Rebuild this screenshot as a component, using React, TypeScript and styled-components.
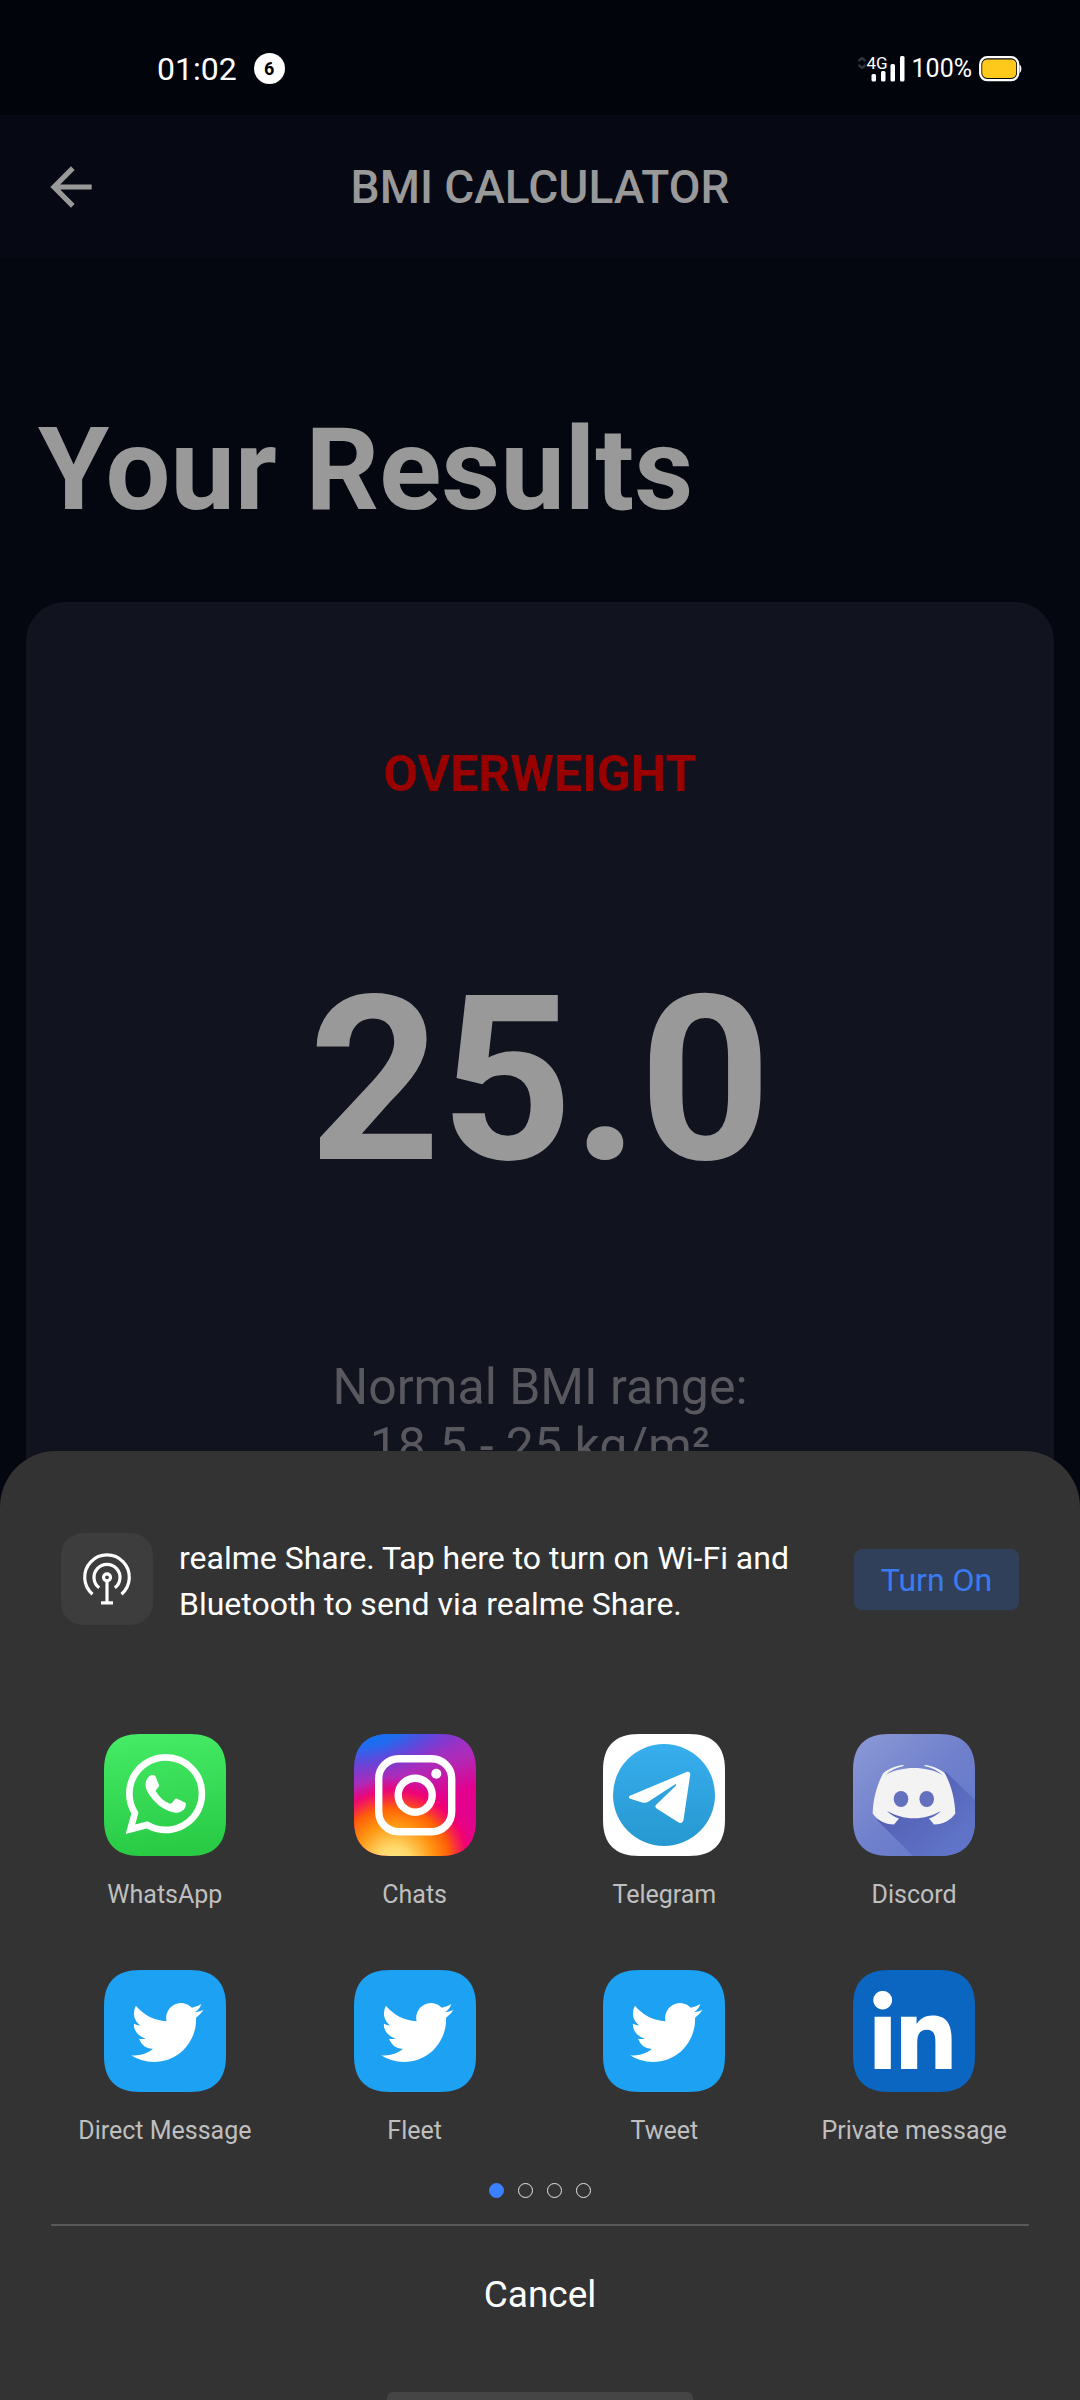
import React from 'react';
import styled, { createGlobalStyle } from 'styled-components';
import { MdArrowBack } from 'react-icons/md';
import { SiWhatsapp } from 'react-icons/si';
import { FaLinkedinIn } from 'react-icons/fa';

const GlobalStyle = createGlobalStyle`
  *, *::before, *::after { box-sizing: border-box; }
  body {
    margin: 0;
    background: #050710;
    font-family: Roboto, 'Liberation Sans', sans-serif;
  }
  h1, h2, p, ul { margin: 0; padding: 0; }
  button { border: 0; padding: 0; background: none; font: inherit; color: inherit; cursor: pointer; }
`;

const Screen = styled.div`
  position: relative;
  display: flex;
  flex-direction: column;
  height: 100vh;
  overflow: hidden;
  background: #050710;
`;

const StatusBar = styled.header`
  display: flex;
  align-items: center;
  justify-content: space-between;
  height: 115px;
  padding: 46px 58px 24px 157px;
  flex: none;
  background: #02040c;
  color: #fff;
`;

const StatusGroup = styled.div<{ $gap: number }>`
  display: flex;
  align-items: center;
  gap: ${(p) => p.$gap}px;
`;

const Clock = styled.time`
  font-size: 32px;
  line-height: 40px;
`;

const Count = styled.span`
  display: grid;
  place-items: center;
  width: 31px;
  height: 31px;
  border-radius: 50%;
  background: #fff;
  color: #000;
  font-size: 18px;
  font-weight: 700;
  line-height: 20px;
`;

const Percent = styled.span`
  font-size: 25px;
  line-height: 30px;
`;

const Signal = styled.div`
  display: flex;
  align-items: flex-start;
`;

const NetworkLabel = styled.span`
  width: 20px;
  margin-right: -16px;
  font-size: 17px;
  line-height: 14px;
`;

const AppBar = styled.nav`
  display: grid;
  grid-template-columns: 1fr auto 1fr;
  align-items: center;
  height: 143px;
  padding: 0 40px;
  flex: none;
  background: #060813;
  color: #999;
`;

const BackButton = styled.button`
  display: flex;
  justify-self: start;
`;

const Title = styled.h1`
  font-size: 46px;
  font-weight: 500;
  line-height: 56px;
`;

const Main = styled.main`
  display: flex;
  flex-direction: column;
  flex: 1;
  padding: 144px 26px 26px;
`;

const Heading = styled.h2`
  padding-left: 12px;
  color: #999;
  font-size: 115px;
  font-weight: 700;
  line-height: 136px;
`;

const ResultCard = styled.section`
  display: flex;
  flex-direction: column;
  align-items: center;
  gap: 143px;
  flex: 1;
  margin-top: 64px;
  padding: 142px 26px;
  border-radius: 39px;
  background: #11131e;
  text-align: center;
`;

const Verdict = styled.p`
  color: #990000;
  font-size: 50px;
  font-weight: 700;
  line-height: 60px;
`;

const Score = styled.p`
  color: #999;
  font-size: 230px;
  font-weight: 700;
  line-height: 268px;
`;

const Range = styled.p`
  color: #58585e;
  font-size: 50px;
  line-height: 59px;
`;

const Sheet = styled.section`
  position: absolute;
  inset: auto 0 0;
  display: flex;
  flex-direction: column;
  padding-top: 82px;
  border-radius: 56px 56px 0 0;
  background: #333;
  color: #fff;
`;

const ShareRow = styled.div`
  display: flex;
  align-items: center;
  height: 92px;
  padding: 0 61px;
`;

const ShareIcon = styled.svg`
  flex: none;
  width: 92px;
  height: 92px;
  border-radius: 22px;
  background: #3d3d3d;
`;

const ShareText = styled.p`
  flex: 1;
  max-width: 640px;
  margin: 0 34px 0 26px;
  padding-top: 4px;
  font-size: 32px;
  line-height: 46px;
`;

const TurnOn = styled.button`
  flex: none;
  width: 165px;
  height: 61px;
  margin-left: auto;
  padding-top: 2px;
  border-radius: 8px;
  background: #31405a;
  color: #397bf2;
  font-size: 32px;
  line-height: 40px;
`;

const AppGrid = styled.ul`
  display: grid;
  grid-template-columns: repeat(4, 1fr);
  row-gap: 60px;
  margin-top: 109px;
  padding: 0 41px 0 40px;
  list-style: none;
`;

const AppButton = styled.button`
  display: flex;
  flex-direction: column;
  align-items: center;
  gap: 24px;
  width: 100%;
  color: #bfbfbf;
  font-size: 25px;
  line-height: 30px;
`;

const Dots = styled.div`
  display: flex;
  justify-content: center;
  gap: 14px;
  margin-top: 37px;
`;

const Dot = styled.button<{ $active: boolean }>`
  width: 15px;
  height: 15px;
  border-radius: 50%;
  border: 1px solid ${(p) => (p.$active ? '#3a80ff' : '#e6e6e6')};
  background: ${(p) => (p.$active ? '#3a80ff' : 'transparent')};
`;

const Divider = styled.hr`
  width: auto;
  height: 2px;
  margin: 26px 51px 0;
  border: 0;
  background: #595959;
`;

const Cancel = styled.button`
  height: 138px;
  font-size: 37px;
  line-height: 44px;
`;

const HomeBar = styled.div`
  width: 306px;
  height: 8px;
  margin: 28px auto 0;
  border-radius: 6px 6px 0 0;
  background: #454545;
`;

const SQUIRCLE =
  'M36 0H86C110 0 122 12 122 36V86C122 110 110 122 86 122H36C12 122 0 110 0 86V36C0 12 12 0 36 0Z';

function Tile({ fill, children }: { fill: string; children?: React.ReactNode }) {
  return (
    <svg width="122" height="122" viewBox="0 0 122 122" aria-hidden="true">
      <path d={SQUIRCLE} fill={fill} />
      {children}
    </svg>
  );
}

const WhatsAppIcon = () => (
  <Tile fill="url(#wa)">
    <defs>
      <linearGradient id="wa" x1="0" y1="0" x2="0.1" y2="1">
        <stop offset="0" stopColor="#46ec66" />
        <stop offset="1" stopColor="#29cb45" />
      </linearGradient>
    </defs>
    <SiWhatsapp x="21.5" y="20" size="80" color="#fff" />
  </Tile>
);

const InstagramIcon = () => (
  <Tile fill="url(#ig-base)">
    <defs>
      <linearGradient id="ig-base" x1="0.35" y1="0" x2="0.65" y2="1">
        <stop offset="0" stopColor="#7a3bdc" />
        <stop offset="0.32" stopColor="#ae2bb8" />
        <stop offset="0.58" stopColor="#e3008e" />
        <stop offset="1" stopColor="#e0088c" />
      </linearGradient>
      <radialGradient id="ig-blue" gradientUnits="userSpaceOnUse" cx="0" cy="0" r="1" gradientTransform="translate(18 -4) rotate(-12) scale(104 50)">
        <stop offset="0" stopColor="#007cf5" />
        <stop offset="0.35" stopColor="#1f6cf0" stopOpacity="0.9" />
        <stop offset="1" stopColor="#5a3fd8" stopOpacity="0" />
      </radialGradient>
      <radialGradient id="ig-warm" gradientUnits="userSpaceOnUse" cx="40" cy="130" r="88">
        <stop offset="0" stopColor="#ffe88c" />
        <stop offset="0.2" stopColor="#ffd868" />
        <stop offset="0.46" stopColor="#ff9410" />
        <stop offset="0.64" stopColor="#ff6008" />
        <stop offset="0.84" stopColor="#f6006a" stopOpacity="0.8" />
        <stop offset="1" stopColor="#e6008a" stopOpacity="0" />
      </radialGradient>
    </defs>
    <path d={SQUIRCLE} fill="url(#ig-warm)" />
    <path d={SQUIRCLE} fill="url(#ig-blue)" />
    <g fill="none" stroke="#fff" strokeWidth="7.4">
      <rect x="24.7" y="24.7" width="73" height="73" rx="20" />
      <circle cx="61.2" cy="61.2" r="17" />
    </g>
    <circle cx="82.3" cy="39.8" r="5" fill="#fff" />
  </Tile>
);

const TelegramIcon = () => (
  <Tile fill="#fff">
    <defs>
      <linearGradient id="tg" x1="0" y1="0" x2="0" y2="1">
        <stop offset="0" stopColor="#37aeee" />
        <stop offset="1" stopColor="#2798d0" />
      </linearGradient>
    </defs>
    <circle cx="61" cy="61" r="51" fill="url(#tg)" />
    <path
      fill="#fff"
      d="M27.5 61.6L83.5 38C86 37 87.4 38.2 87.2 40.6L80.6 85.2C80 89 77.8 90 74.8 88L53.6 74.6C52 73.4 52 72 53.4 70.6L72.6 52C73.8 50.6 73 49.8 71.4 50.8L45.6 67.4C43.4 68.8 41.6 69 39.2 68.4L28 65C25.4 64.2 25.2 62.6 27.5 61.6Z"
    />
  </Tile>
);

const DiscordIcon = () => (
  <Tile fill="url(#dc)">
    <defs>
      <linearGradient id="dc" x1="0" y1="0" x2="1" y2="1">
        <stop offset="0" stopColor="#8c9ad6" />
        <stop offset="0.5" stopColor="#7080cc" />
        <stop offset="1" stopColor="#5f78cb" />
      </linearGradient>
      <linearGradient id="dc-shadow" gradientUnits="userSpaceOnUse" x1="50" y1="60" x2="100" y2="115">
        <stop offset="0" stopColor="#5560b4" />
        <stop offset="1" stopColor="#5f74c8" />
      </linearGradient>
    </defs>
    <path
      d="M93 38L122 66V86C122 110 110 122 86 122H60L24 86L60 50Z"
      fill="url(#dc-shadow)"
    />
    <path
      fill="#f3f3f4"
      d="M30 39.5C35 35 43 31.5 50.3 31L50.8 32C43 33.6 37 36.5 32.5 41C41 36 51 34 61 34S81 36 89.5 41C85 36.5 79 33.6 71.2 32L71.7 31C79 31.5 87 35 92 39.5C98 51 102 65 102.3 79.5C98 86 90 90.5 81 90.6L76 84.4C80.5 83 84.5 80.5 88 77C80 81.5 71 84.3 61 84.3S42 81.5 34 77C37.5 80.5 41.5 83 46 84.4L41 90.6C32 90.5 24 86 19.7 79.5C20 65 24 51 30 39.5Z"
    />
    <ellipse cx="48" cy="65" rx="7.3" ry="8" fill="#6270bd" />
    <ellipse cx="73.7" cy="65" rx="7.3" ry="8" fill="#6270bd" />
  </Tile>
);

const TwitterIcon = () => (
  <Tile fill="#1da1f2">
    <path
      transform="translate(27 26.2) scale(3.02)"
      fill="#fff"
      d="M23.953 4.57a10 10 0 01-2.825.775 4.958 4.958 0 002.163-2.723c-.951.555-2.005.959-3.127 1.184a4.92 4.92 0 00-8.384 4.482C7.69 8.095 4.067 6.13 1.64 3.162a4.822 4.822 0 00-.666 2.475c0 1.71.87 3.213 2.188 4.096a4.904 4.904 0 01-2.228-.616v.06a4.923 4.923 0 003.946 4.827 4.996 4.996 0 01-2.212.085 4.936 4.936 0 004.604 3.417 9.867 9.867 0 01-6.102 2.105c-.39 0-.779-.023-1.17-.067a13.995 13.995 0 007.557 2.209c9.053 0 13.998-7.496 13.998-13.985 0-.21 0-.42-.015-.63A9.935 9.935 0 0024 4.59z"
    />
  </Tile>
);

const LinkedInIcon = () => (
  <Tile fill="#0b66c2">
    <FaLinkedinIn x="14.7" y="20.7" size="89.5" color="#fff" />
  </Tile>
);

const APPS = [
  { name: 'WhatsApp', Icon: WhatsAppIcon },
  { name: 'Chats', Icon: InstagramIcon },
  { name: 'Telegram', Icon: TelegramIcon },
  { name: 'Discord', Icon: DiscordIcon },
  { name: 'Direct Message', Icon: TwitterIcon },
  { name: 'Fleet', Icon: TwitterIcon },
  { name: 'Tweet', Icon: TwitterIcon },
  { name: 'Private message', Icon: LinkedInIcon },
];

export default function App() {
  return (
    <Screen>
      <GlobalStyle />
      <StatusBar>
        <StatusGroup $gap={17}>
          <Clock>01:02</Clock>
          <Count>6</Count>
        </StatusGroup>
        <StatusGroup $gap={7}>
          <Signal>
            <svg width="10" height="14" viewBox="0 0 10 14" fill="none" stroke="#33353d" strokeWidth="2.4" aria-hidden="true">
              <path d="M1.5 5L5 2L8.5 5M1.5 9L5 12L8.5 9" />
            </svg>
            <NetworkLabel>4G</NetworkLabel>
            <svg width="34" height="26" viewBox="0 0 34 26" fill="#fff" aria-hidden="true">
              <rect x="0.5" y="18" width="4.5" height="7.5" rx="1.5" />
              <rect x="10" y="15" width="4.5" height="10.5" rx="1.5" />
              <rect x="19.5" y="8" width="4.5" height="17.5" rx="1.5" />
              <rect x="29" y="0" width="4.5" height="25.5" rx="1.5" />
            </svg>
          </Signal>
          <Percent>100%</Percent>
          <svg width="43" height="26" viewBox="0 0 43 26" aria-hidden="true">
            <rect x="1.2" y="1.2" width="38" height="23" rx="7" fill="#02040c" stroke="#fff" strokeWidth="2.3" />
            <rect x="3.2" y="3.4" width="34" height="18.6" rx="5" fill="#ffc91c" />
            <path d="M40.5 8.5C43 10 43 15.5 40.5 17Z" fill="#fff" />
          </svg>
        </StatusGroup>
      </StatusBar>

      <AppBar>
        <BackButton aria-label="Back">
          <MdArrowBack size={62} />
        </BackButton>
        <Title>BMI CALCULATOR</Title>
      </AppBar>

      <Main>
        <Heading>Your Results</Heading>
        <ResultCard>
          <Verdict>OVERWEIGHT</Verdict>
          <Score>25.0</Score>
          <Range>
            Normal BMI range:
            <br />
            18.5 - 25 kg/m²
          </Range>
        </ResultCard>
      </Main>

      <Sheet role="dialog" aria-label="Share">
        <ShareRow>
          <ShareIcon viewBox="0 0 92 92" fill="none" stroke="#fff" strokeWidth="3.2" aria-hidden="true">
            <circle cx="46" cy="44.3" r="3.5" />
            <path d="M46 48V69M40 69.8H52" />
            <path d="M38.2 54.7A13 13 0 1 1 53.8 54.7" />
            <path d="M31.5 61.2A22.3 22.3 0 1 1 60.5 61.2" />
          </ShareIcon>
          <ShareText>realme Share. Tap here to turn on Wi-Fi and Bluetooth to send via realme Share.</ShareText>
          <TurnOn>Turn On</TurnOn>
        </ShareRow>
        <AppGrid>
          {APPS.map(({ name, Icon }) => (
            <li key={name}>
              <AppButton>
                <Icon />
                <span>{name}</span>
              </AppButton>
            </li>
          ))}
        </AppGrid>
        <Dots>
          {[1, 2, 3, 4].map((page) => (
            <Dot key={page} $active={page === 1} aria-label={`Page ${page}`} />
          ))}
        </Dots>
        <Divider />
        <Cancel>Cancel</Cancel>
        <HomeBar />
      </Sheet>
    </Screen>
  );
}
